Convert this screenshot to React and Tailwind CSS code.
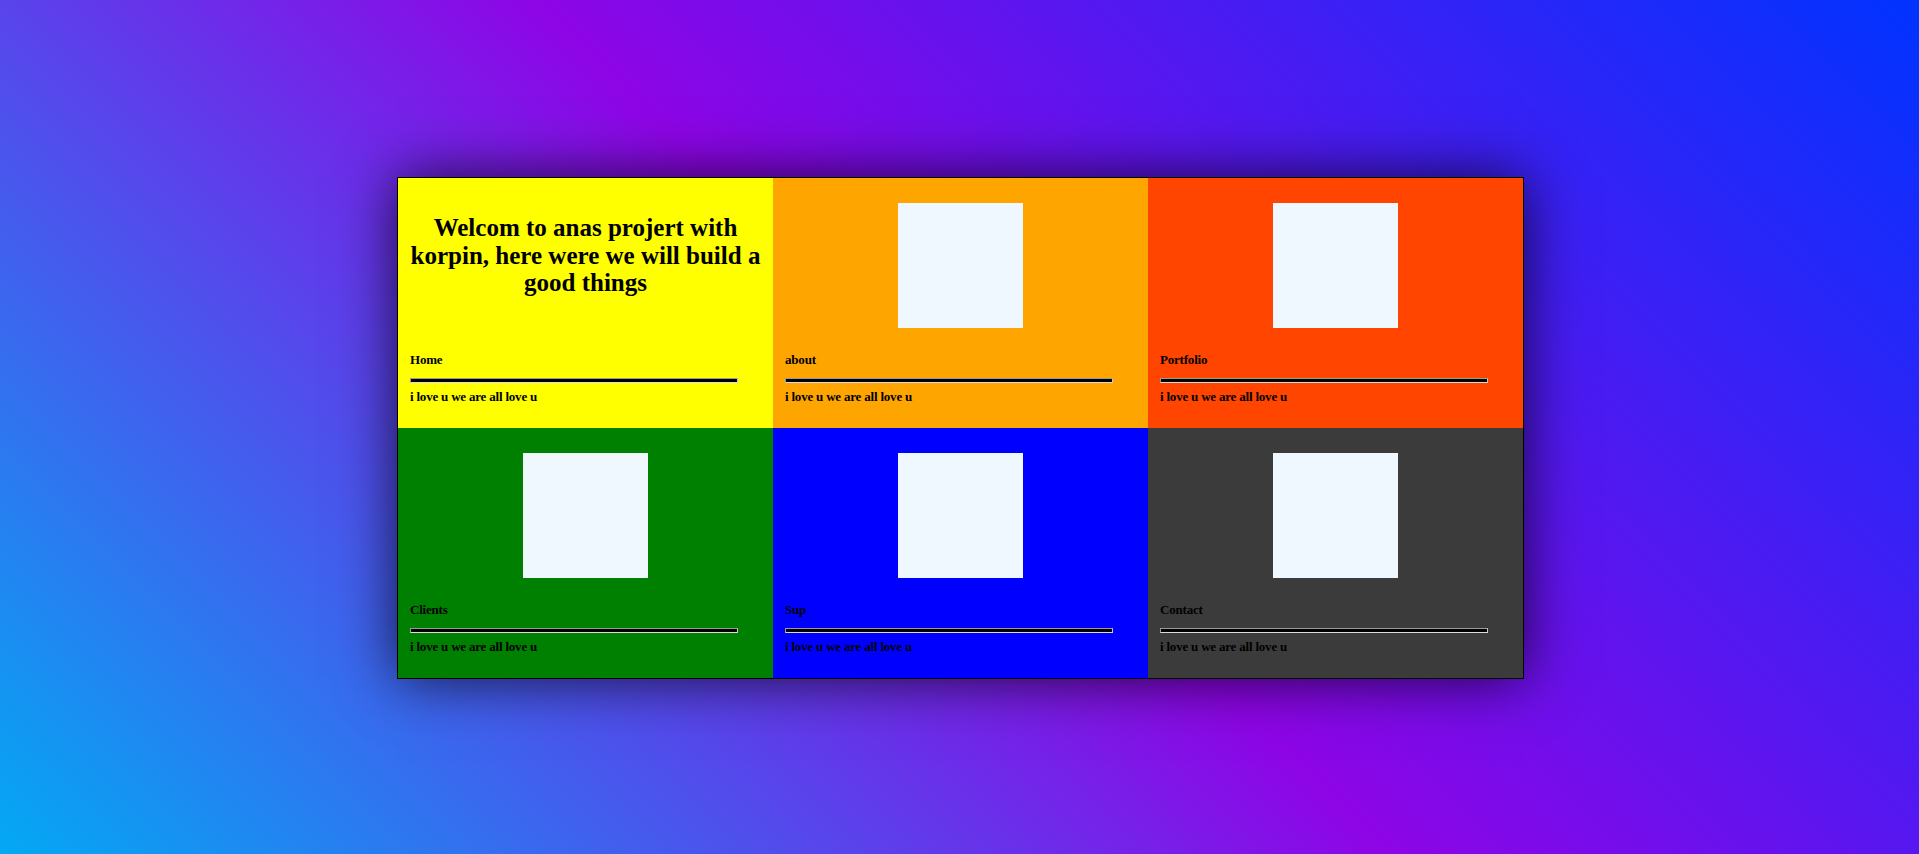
import React from 'react';

const cards = [
  { title: 'Home', bg: 'bg-[#ffff00]', hero: true },
  { title: 'about', bg: 'bg-[#ffa500]' },
  { title: 'Portfolio', bg: 'bg-[#ff4500]' },
  { title: 'Clients', bg: 'bg-[#008000]' },
  { title: 'Sup', bg: 'bg-[#0000ff]' },
  { title: 'Contact', bg: 'bg-[#3b3b3b]' },
];

const Card = ({ title, bg, hero }) => (
  <div className={`${bg} h-[250px] flex flex-col px-3 pt-[25px] text-black`}>
    <div className="h-[125px] flex justify-center">
      {hero ? (
        <h1 className="-mx-1 mt-[11px] text-[25px] leading-[27.5px] font-bold text-center">
          Welcom to anas projert with korpin, here were we will build a good things
        </h1>
      ) : (
        <div className="w-[125px] h-[125px] bg-[#f0f8ff]" />
      )}
    </div>
    <h5 className="mt-[24px] text-[13px] leading-[15px] font-bold tracking-[-0.2px]">{title}</h5>
    <div className="mt-[11px] h-[5px] w-[328px] bg-black border border-t-[#9a9a9a] border-l-[#9a9a9a] border-r-[#c8c8c8] border-b-[#dcdcdc]" />
    <p className="mt-[6px] text-[13px] leading-[15px] font-bold tracking-[-0.2px]">i love u we are all love u</p>
  </div>
);

export default function App() {
  return (
    <div className="h-screen w-full flex items-center justify-center pt-[2px] pl-[2px] bg-[linear-gradient(45deg,#03a9f4,#8e05e6,#0033ff)] font-['Liberation_Serif','Times_New_Roman',serif]">
      <div className="grid grid-cols-[375px_375px_375px] border border-black shadow-[0_0_55px_rgba(0,0,0,0.75)]">
        {cards.map(c => (
          <Card key={c.title} {...c} />
        ))}
      </div>
    </div>
  );
}
